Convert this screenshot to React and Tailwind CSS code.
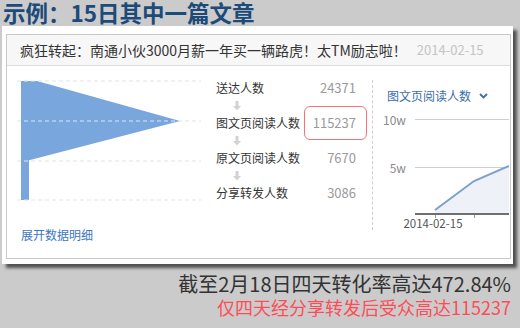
import React from 'react';

const rows = [
  { label: '送达人数', value: '24371' },
  { label: '图文页阅读人数', value: '115237', hot: true },
  { label: '原文页阅读人数', value: '7670' },
  { label: '分享转发人数', value: '3086' },
];

function DownArrow() {
  return (
    <svg width="10" height="10" viewBox="0 0 10 10" className="block">
      <rect x="3.5" y="0" width="3" height="5" fill="#d2d2d2" />
      <polygon points="1,5 9,5 5,9.5" fill="#d2d2d2" />
    </svg>
  );
}

function Funnel() {
  const dash = { stroke: '#dde5ef', strokeWidth: 1.2, strokeDasharray: '4 3' };
  return (
    <svg width="184" height="122" viewBox="0 0 184 122" className="block">
      <polygon points="4,1 20,1 163,41 13,80 4,81" fill="#79a6dc" />
      <rect x="4" y="80" width="8" height="40" fill="#79a6dc" />
      <line x1="0" y1="1" x2="184" y2="1" {...dash} />
      <line x1="0" y1="41" x2="184" y2="41" {...dash} />
      <line x1="0" y1="81" x2="184" y2="81" {...dash} />
      <line x1="0" y1="120" x2="184" y2="120" {...dash} />
    </svg>
  );
}

function LineChart() {
  const ff = '"Noto Sans CJK SC", "Liberation Sans", sans-serif';
  return (
    <svg width="136" height="126" viewBox="0 0 136 126" className="block">
      <text x="33" y="19" textAnchor="end" fontSize="12" fill="#8a8a8a" fontFamily={ff}>10w</text>
      <line x1="42" y1="13.5" x2="136" y2="13.5" stroke="#cfcfcf" />
      <text x="33" y="67" textAnchor="end" fontSize="12" fill="#8a8a8a" fontFamily={ff}>5w</text>
      <line x1="42" y1="61.5" x2="136" y2="61.5" stroke="#cfcfcf" />
      <polygon points="62,107 62,104 101,75 136,60 136,107" fill="#eef2f8" />
      <polyline points="62,104 101,75 136,60" fill="none" stroke="#7e9fcc" strokeWidth="2" />
      <line x1="42" y1="108" x2="136" y2="108" stroke="#6f6f6f" strokeWidth="2" />
      <line x1="62.5" y1="109" x2="62.5" y2="112" stroke="#999" />
      <line x1="101.5" y1="109" x2="101.5" y2="112" stroke="#999" />
      <text x="60" y="122" textAnchor="middle" fontSize="11.5" fill="#555" fontFamily={ff}>2014-02-15</text>
    </svg>
  );
}

export default function App() {
  return (
    <div className="w-[520px] h-[328px] overflow-hidden bg-[#cbcbcb] font-['Noto_Sans_CJK_SC','Liberation_Sans',sans-serif]">
      <h1 className="h-[26px] pl-[3px] text-[22.5px] leading-[26px] font-bold text-[#1c4a79] -mt-[1px]">示例：15日其中一篇文章</h1>

      {/* card */}
      <div className="mt-[1px] ml-[2px] w-[511px] bg-white pt-[8px] pl-[4px] pr-[2px] pb-[5px] shadow-[4px_4px_3px_rgba(0,0,0,0.6)]">
        <div className="h-[225px] border border-[#c9c9c9]">
          <div className="h-[31px] bg-[#f7f7f7] border-b border-[#dcdcdc] flex items-center pl-[13px] text-[14px] text-[#333]">
            <span>疯狂转起：南通小伙3000月薪一年买一辆路虎！太TM励志啦！</span>
            <span className="ml-[10px] text-[13px] text-[#c4c4c4]">2014-02-15</span>
          </div>

          <div className="flex h-[192px]">
            {/* funnel */}
            <div className="w-[199px] pl-[10px] pt-[14px]">
              <Funnel />
              <a className="block mt-[25px] pl-[4px] text-[12px] leading-[16px] text-[#3b78c2]">展开数据明细</a>
            </div>

            {/* steps */}
            <div className="ml-[10px] w-[140px] pt-[12px] text-[12px]">
              {rows.map((r, i) => (
                <div key={r.label}>
                  {i > 0 && (
                    <div className="h-[15px] pl-[16px] flex items-center">
                      <DownArrow />
                    </div>
                  )}
                  <div className="h-[20px] flex items-center justify-between">
                    <span className="text-[#333]">{r.label}</span>
                    <span className="relative text-[13px] text-[#9a9a9a]">
                      {r.value}
                      {r.hot && (
                        <span className="absolute -left-[9px] -right-[11px] -top-[7px] -bottom-[7px] border border-[#f2737a] rounded-[6px]" />
                      )}
                    </span>
                  </div>
                </div>
              ))}
            </div>

            {/* trend */}
            <div className="ml-[16px] mt-[14px] h-[150px] flex-1 border-l border-dashed border-[#cfcfcf]">
              <div className="pl-[14px] pt-[8px] flex items-center gap-[8px] text-[12px] leading-[16px] text-[#3a6ea8]">
                <span>图文页阅读人数</span>
                <svg width="9" height="6" viewBox="0 0 9 6">
                  <polyline points="1,1 4.5,4.5 8,1" fill="none" stroke="#3a6ea8" strokeWidth="1.8" />
                </svg>
              </div>
              <div className="mt-[2px]">
                <LineChart />
              </div>
            </div>
          </div>
        </div>
      </div>

      <div className="mt-[8px] pr-[9px] text-right">
        <p className="text-[20px] leading-[24px] text-[#333]">截至2月18日四天转化率高达472.84%</p>
        <p className="text-[18px] leading-[22px] text-[#ff4b57]">仅四天经分享转发后受众高达115237</p>
      </div>
    </div>
  );
}
